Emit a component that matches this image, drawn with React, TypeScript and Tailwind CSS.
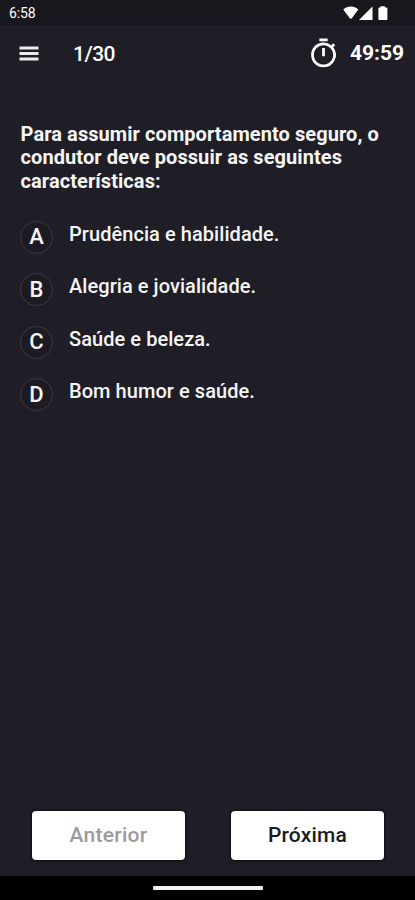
import { useState } from "react";

const question = [
  "Para assumir comportamento seguro, o",
  "condutor deve possuir as seguintes",
  "características:",
];

const options = [
  { letter: "A", text: "Prudência e habilidade." },
  { letter: "B", text: "Alegria e jovialidade." },
  { letter: "C", text: "Saúde e beleza." },
  { letter: "D", text: "Bom humor e saúde." },
];

function StatusBar() {
  return (
    <div className="flex h-[25px] items-center justify-between bg-[#18171d] pr-[26px] pl-[9px] text-white">
      <span className="text-[14px] leading-4 tracking-[-0.1px]">6:58</span>
      <svg className="h-4 w-[46px]" viewBox="0 0 46 16" fill="currentColor">
        <path d="M0.3 4.4C4.3 0.4 11.3 0.4 15.3 4.4L9.2 12.8Q7.8 14.6 6.4 12.8Z" />
        <path d="M29.5 1.5V15H16Z" />
        <path d="M37.5 2.4V1.3h4.4v1.1h1.6q.9 0 .9.9v10.8q0 .9-.9.9h-7.2q-.9 0-.9-.9V3.3q0-.9.9-.9z" />
      </svg>
    </div>
  );
}

function Header() {
  return (
    <header className="flex h-[58px] items-center border-b border-[#1a1920] pr-[11px] pl-[19px] text-white">
      <button type="button" aria-label="Menu">
        <svg className="h-[15px] w-[20px]" viewBox="0 0 20 15" fill="#ececec">
          <rect x="0.5" y="0.5" width="19" height="3" />
          <rect x="0.5" y="6" width="19" height="3" />
          <rect x="0.5" y="11.5" width="19" height="3" />
        </svg>
      </button>
      <span className="ml-[34px] text-[21px] leading-6 font-medium tracking-[-0.5px]">1/30</span>
      <svg className="ml-auto size-[33px]" viewBox="0 0 24 24" fill="currentColor">
        <path d="M15 1H9v2h6V1zm-4 13h2V8h-2v6zm8.03-6.61 1.42-1.42c-.43-.51-.9-.99-1.41-1.41l-1.42 1.42A8.962 8.962 0 0 0 12 4c-4.97 0-9 4.03-9 9s4.02 9 9 9a8.994 8.994 0 0 0 7.03-14.61zM12 20c-3.87 0-7-3.13-7-7s3.13-7 7-7 7 3.13 7 7-3.13 7-7 7z" />
      </svg>
      <span className="-mt-[2px] ml-[10px] text-[21px] leading-6 font-bold">49:59</span>
    </header>
  );
}

export default function App() {
  const [selected, setSelected] = useState<string | null>(null);

  return (
    <div className="flex h-[900px] w-[415px] flex-col overflow-hidden bg-[#1f1e27] font-[Roboto,sans-serif]">
      <StatusBar />
      <Header />

      <main className="flex-1 px-[20px] pt-[40px] text-[#f5f5f5]">
        <h1 className="ml-[0.6px] text-[20px] leading-[23.4px] font-bold tracking-[0.07px]">
          {question.map((line) => (
            <span key={line} className="block whitespace-nowrap">
              {line}
            </span>
          ))}
        </h1>

        <ul className="mt-[27.5px] flex flex-col gap-[19.5px]">
          {options.map((o) => (
            <li key={o.letter} className="flex h-[33px] cursor-pointer" onClick={() => setSelected(o.letter)}>
              <span
                className={`flex size-[33px] items-center justify-center rounded-full border text-[22px] leading-6 font-medium ${
                  selected === o.letter ? "border-white bg-[#35343f]" : "border-[#3b3a41] bg-[#1c1b22]"
                }`}
              >
                {o.letter}
              </span>
              <span className="ml-[16px] text-[20px] leading-[26px] font-medium tracking-[0.06px] whitespace-nowrap">
                {o.text}
              </span>
            </li>
          ))}
        </ul>
      </main>

      <footer className="flex justify-between pr-[31px] pb-[16px] pl-[32px]">
        <button
          type="button"
          disabled
          className="h-[49px] w-[153px] rounded-[4px] bg-white text-[21px] font-medium tracking-[0.25px] text-[#9b9b9b] shadow-[0_0_2px_1px_#0b0b0e]"
        >
          Anterior
        </button>
        <button
          type="button"
          className="h-[49px] w-[153px] rounded-[4px] bg-white text-[21px] font-medium tracking-[0.2px] text-[#1c1c1c] shadow-[0_0_2px_1px_#0b0b0e]"
        >
          Próxima
        </button>
      </footer>

      <div className="flex h-[24px] items-center justify-center bg-black">
        <div className="h-[4px] w-[110px] rounded-[1px] bg-[#f2f2f2]" />
      </div>
    </div>
  );
}
